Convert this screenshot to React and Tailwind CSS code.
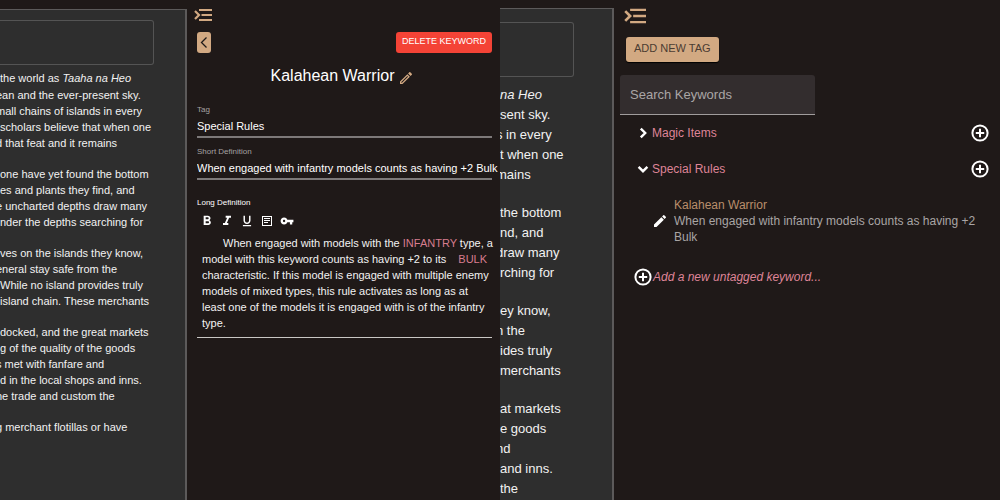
import React from "react";
import {
  MdOutlineEdit,
  MdEdit,
  MdFormatBold,
  MdFormatItalic,
  MdFormatUnderlined,
  MdVpnKey,
} from "react-icons/md";

const leftLines = [
  [<>the world as <i>Taaha na Heo</i></>, false],
  ["ean and the ever-present sky.", true],
  ["mall chains of islands in every", true],
  ["scholars believe that when one", false],
  ["d that feat and it remains", true],
  ["", false],
  ["one have yet found the bottom", false],
  ["es and plants they find, and", false],
  ["e uncharted depths draw many", true],
  ["nder the depths searching for", false],
  ["", false],
  ["ves on the islands they know,", false],
  ["eneral stay safe from the", true],
  ["While no island provides truly", false],
  ["island chain. These merchants", false],
  ["", false],
  ["docked, and the great markets", false],
  ["g of the quality of the goods", false],
  ["s met with fanfare and", true],
  ["d in the local shops and inns.", false],
  ["he trade and custom the", true],
  ["", false],
  ["g merchant flotillas or have", true],
];

const rightLines = [
  [<i>na Heo</i>, false],
  ["sent sky.", false],
  ["s in every", true],
  ["t when one", false],
  ["mains", true],
  ["", false],
  ["the bottom", false],
  ["nd, and", false],
  ["draw many", true],
  ["rching for", false],
  ["", false],
  ["ey know,", false],
  ["n the", true],
  ["ides truly", false],
  ["merchants", false],
  ["", false],
  ["at markets", false],
  ["e goods", false],
  ["nd", true],
  ["and inns.", false],
  ["the", false],
];

function Lines({ lines, rowClass, gapClass }) {
  return lines.map(([text, cut], i) => (
    <p key={i} className={`${text ? rowClass : gapClass} ${cut ? "-ml-1" : ""}`}>{text}</p>
  ));
}

function CollapseIcon({ className }) {
  return (
    <svg viewBox="0 0 18 12" className={className} fill="none" stroke="currentColor" strokeWidth="2">
      <path d="M5 1h13M7.5 6H18M5 11h13" />
      <path d="m1 2 4 4-4 4" strokeWidth="2.2" />
    </svg>
  );
}

function PlusCircle() {
  return (
    <svg viewBox="0 0 20 20" className="size-5 text-white" fill="none" stroke="currentColor" strokeWidth="2">
      <circle cx="10" cy="10" r="7.6" />
      <path d="M10 5.8v8.4M5.8 10h8.4" />
    </svg>
  );
}

function Chevron({ open }) {
  return (
    <svg viewBox="0 0 18 18" className="size-[18px] text-white" fill="none" stroke="currentColor" strokeWidth="2.4">
      <path d={open ? "m4.6 6.8 4.4 4.4 4.4-4.4" : "m6.8 4.6 4.4 4.4-4.4 4.4"} />
    </svg>
  );
}

function DocumentLeft() {
  return (
    <section className="mt-[9px] w-[187px] shrink-0 overflow-hidden border-t border-r-2 border-[#5c5a5a] bg-[#2e2e2e]">
      <div className="mt-[10px] mr-[31px] h-[45px] rounded-r-[3px] border border-l-0 border-[#545454]" />
      <div className="pt-[5px] text-[11px] whitespace-nowrap text-[#f2f2f2]">
        <Lines lines={leftLines} rowClass="h-4 leading-4 first:h-[17px] first:leading-[17px]" gapClass="h-[15px]" />
      </div>
    </section>
  );
}

function DocumentRight() {
  return (
    <section className="mt-2 w-[114px] shrink-0 overflow-hidden border-t border-r-2 border-[#5c5a5a] bg-[#2e2e2e]">
      <div className="mt-[13px] mr-[38px] h-[55px] rounded-r-[3px] border border-l-0 border-[#545454]" />
      <div className="pt-[7px] text-[13px] whitespace-nowrap text-[#f2f2f2]">
        <Lines lines={rightLines} rowClass="h-5 leading-5 first:h-[21px] first:leading-[21px]" gapClass="h-[18px]" />
      </div>
    </section>
  );
}

function Field({ id, label, value }) {
  return (
    <div className="border-b-2 border-[#7d7979]">
      <label htmlFor={id} className="block text-[8px] leading-3 text-[#a5a2a2]">{label}</label>
      <input id={id} defaultValue={value} className="block h-5 w-[calc(100%+8px)] bg-transparent text-[11px] text-white outline-none" />
    </div>
  );
}

function Editor() {
  const tool = "flex size-5 items-center justify-center";
  return (
    <section className="min-w-0 flex-1 pt-[9px] pr-2 pl-[10px]">
      <button aria-label="Close panel" className="-ml-[3px] block text-[#d2a982]">
        <CollapseIcon className="h-3 w-[18px]" />
      </button>
      <div className="mt-[11px] flex justify-between">
        <button aria-label="Back" className="flex h-[21px] w-[14px] items-center justify-center rounded-[3px] bg-[#d2a982] text-[#1f1a19]">
          <svg viewBox="0 0 14 21" className="h-[21px] w-[14px]" fill="none" stroke="currentColor" strokeWidth="1.3"><path d="M9.5 5.5 4.5 10.5l5 5" /></svg>
        </button>
        <button className="h-[21px] rounded-[3px] bg-[#f44336] px-[6px] pb-[2px] text-[9px] text-white">DELETE KEYWORD</button>
      </div>
      <div className="mt-3 flex h-[22px] items-center justify-center gap-1">
        <h1 className="text-[16px] text-white">Kalahean Warrior</h1>
        <button aria-label="Edit name" className="mt-1 mr-1 text-[#d2a982]"><MdOutlineEdit className="size-4" /></button>
      </div>
      <div className="mt-[17px] flex flex-col gap-2">
        <Field id="tag" label="Tag" value="Special Rules" />
        <Field id="short" label="Short Definition" value="When engaged with infantry models counts as having +2 Bulk" />
      </div>
      <h2 className="mt-[17px] text-[8px] leading-3 text-white">Long Definition</h2>
      <div className="mt-[2px] flex h-5 text-white">
        <button aria-label="Bold" className={tool}><MdFormatBold className="size-4" /></button>
        <button aria-label="Italic" className={tool}><MdFormatItalic className="size-4" /></button>
        <button aria-label="Underline" className={tool}><MdFormatUnderlined className="size-[14px]" /></button>
        <button aria-label="Note" className={tool}>
          <svg viewBox="0 0 12 12" className="size-3" fill="none" stroke="currentColor"><rect x="1.5" y="1.5" width="9" height="9" /><path d="M3 3.5h6M3 5.5h6M3 7.5h4" strokeWidth="1.2" /></svg>
        </button>
        <button aria-label="Keyword" className={tool}><MdVpnKey className="size-[14px]" /></button>
      </div>
      <div className="mt-1 border-b border-[#c9c7c4] pb-[6px] pl-[5px] text-[11px] leading-4 whitespace-nowrap text-[#f2f2f2]">
        <p className="pl-[21px]">When engaged with models with the <span className="text-[#d87d8f]">INFANTRY</span> type, a</p>
        <p>model with this keyword counts as having +2 to its <span className="pl-[9px] text-[#d87d8f]">BULK</span></p>
        <p>characteristic. If this model is engaged with multiple enemy</p>
        <p>models of mixed types, this rule activates as long as at</p>
        <p>least one of the models it is engaged with is of the infantry</p>
        <p>type.</p>
      </div>
    </section>
  );
}

function TagRow({ open, name }) {
  return (
    <div className="flex h-9 items-center">
      <button aria-expanded={!!open} className="flex items-center text-[12px] text-[#de8497]">
        <Chevron open={open} />
        {name}
      </button>
      <button aria-label={`Add keyword to ${name}`} className="ml-auto">
        <PlusCircle />
      </button>
    </div>
  );
}

function KeywordList() {
  return (
    <section className="min-w-0 flex-1 pt-2 pr-[10px] pl-[6px]">
      <button aria-label="Close panel" className="ml-1 block text-[#d2a982]"><CollapseIcon className="h-4 w-[22px]" /></button>
      <button className="mt-[13px] ml-[6px] h-[25px] rounded-[3px] bg-[#d2a982] px-2 pb-[3px] text-[11px] text-[#4b3c32] shadow-[0_1px_1px_#000]">ADD NEW TAG</button>
      <input aria-label="Search Keywords" placeholder="Search Keywords" className="mt-[13px] block h-10 w-[195px] rounded-t-[3px] border-b border-[#a09c9c] bg-[#332d2e] px-[10px] text-[13px] text-white outline-none placeholder:text-[#aaa6a6]" />
      <div className="pl-[14px]">
        <TagRow name="Magic Items" />
        <TagRow open name="Special Rules" />
        <div className="mt-[10px] flex items-center gap-[6px] pl-[18px] text-[12px] leading-4">
          <button aria-label="Edit Kalahean Warrior" className="text-white"><MdEdit className="size-4" /></button>
          <div>
            <p className="text-[#b98e6b]">Kalahean Warrior</p>
            <p className="text-[#a9a5a5]">When engaged with infantry models counts as having +2 Bulk</p>
          </div>
        </div>
        <button className="-ml-px mt-[22px] flex items-center text-[12px] text-[#de8497] italic">
          <PlusCircle />
          Add a new untagged keyword...
        </button>
      </div>
    </section>
  );
}

export default function App() {
  return (
    <main className="flex h-screen overflow-hidden bg-[#1f1918] font-['Liberation_Sans',Arial,sans-serif]">
      <div className="flex min-w-0 flex-1 overflow-hidden"><DocumentLeft /><Editor /></div>
      <div className="flex min-w-0 flex-1 overflow-hidden"><DocumentRight /><KeywordList /></div>
    </main>
  );
}
